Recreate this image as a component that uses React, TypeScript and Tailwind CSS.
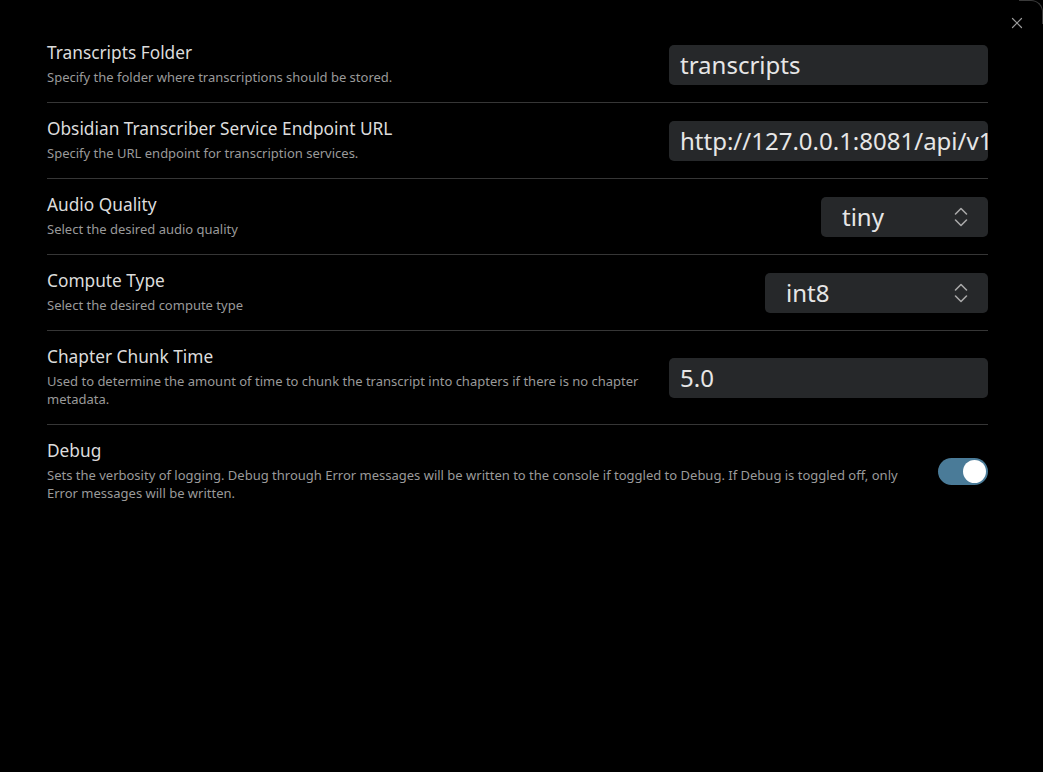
import { X } from 'lucide-react'

const FONT = "font-['Noto_Sans','Open_Sans',sans-serif]"

function Chevrons() {
  return (
    <svg width="16" height="22" viewBox="0 0 16 22" fill="none" stroke="#a8a8a8" strokeWidth="1.6" strokeLinecap="round" strokeLinejoin="round">
      <path d="M2.5 8 L8 2.5 L13.5 8" />
      <path d="M2.5 14 L8 19.5 L13.5 14" />
    </svg>
  )
}

function TextBox({ value }: { value: string }) {
  return (
    <div className="w-[319px] h-[40px] rounded-[5px] bg-[#26282a] pl-[11px] flex items-center overflow-hidden">
      <span className="text-[24px] text-[#e6e6e6] whitespace-nowrap">{value}</span>
    </div>
  )
}

function Select({ value, width }: { value: string; width: string }) {
  return (
    <div className={`${width} h-[40px] rounded-[5px] bg-[#26282a] pl-[21px] pr-[19px] flex items-center justify-between`}>
      <span className="text-[24px] text-[#e6e6e6]">{value}</span>
      <Chevrons />
    </div>
  )
}

function Row({
  name,
  desc,
  control,
  first,
}: {
  name: string
  desc: string
  control: React.ReactNode
  first?: boolean
}) {
  return (
    <div className={`flex items-center gap-[24px] py-[16px] ${first ? '' : 'border-t border-[#363636]'}`}>
      <div className="flex-1 min-w-0">
        <div className="text-[17.3px] leading-[20px] text-[#dcdcdc]">{name}</div>
        <div className="mt-[5px] text-[13px] leading-[18px] text-[#9a9a9a]">{desc}</div>
      </div>
      <div className="flex-shrink-0">{control}</div>
    </div>
  )
}

export default function App() {
  return (
    <div className={`w-[1043px] h-[772px] bg-black relative overflow-hidden ${FONT}`}>
      <div className="absolute top-0 right-0 w-6 h-6 rounded-tr-[12px] border-t border-r border-[#3a3a3a]" />
      <button className="absolute top-[14px] right-[17px] text-[#9a9a9a]" aria-label="Close">
        <X size={18} strokeWidth={1.6} />
      </button>

      <div className="pl-[47px] pr-[55px] pt-[27px]">
        <Row
          first
          name="Transcripts Folder"
          desc="Specify the folder where transcriptions should be stored."
          control={<TextBox value="transcripts" />}
        />
        <Row
          name="Obsidian Transcriber Service Endpoint URL"
          desc="Specify the URL endpoint for transcription services."
          control={<TextBox value="http://127.0.0.1:8081/api/v1/transcribe" />}
        />
        <Row
          name="Audio Quality"
          desc="Select the desired audio quality"
          control={<Select value="tiny" width="w-[167px]" />}
        />
        <Row
          name="Compute Type"
          desc="Select the desired compute type"
          control={<Select value="int8" width="w-[223px]" />}
        />
        <Row
          name="Chapter Chunk Time"
          desc="Used to determine the amount of time to chunk the transcript into chapters if there is no chapter metadata."
          control={<TextBox value="5.0" />}
        />
        <Row
          name="Debug"
          desc="Sets the verbosity of logging. Debug through Error messages will be written to the console if toggled to Debug. If Debug is toggled off, only Error messages will be written."
          control={
            <div className="w-[50px] h-[27px] rounded-full bg-[#4a7b98] flex items-center justify-end pr-[2px]">
              <div className="w-[23px] h-[23px] rounded-full bg-white" />
            </div>
          }
        />
      </div>
    </div>
  )
}
